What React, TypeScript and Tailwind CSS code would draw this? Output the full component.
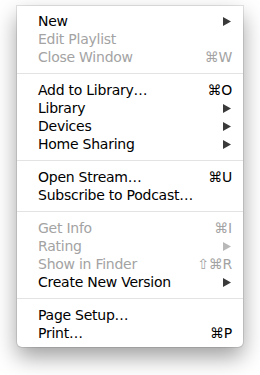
import React from "react";

type Item =
  | { sep: true }
  | { label: string; disabled?: boolean; shortcut?: string; sub?: boolean; sep?: false };

const items: Item[] = [
  { label: "New", sub: true },
  { label: "Edit Playlist", disabled: true },
  { label: "Close Window", disabled: true, shortcut: "⌘W" },
  { sep: true },
  { label: "Add to Library…", shortcut: "⌘O" },
  { label: "Library", sub: true },
  { label: "Devices", sub: true },
  { label: "Home Sharing", sub: true },
  { sep: true },
  { label: "Open Stream…", shortcut: "⌘U" },
  { label: "Subscribe to Podcast…" },
  { sep: true },
  { label: "Get Info", disabled: true, shortcut: "⌘I" },
  { label: "Rating", disabled: true, sub: true },
  { label: "Show in Finder", disabled: true, shortcut: "⇧⌘R" },
  { label: "Create New Version", sub: true },
  { sep: true },
  { label: "Page Setup…" },
  { label: "Print…", shortcut: "⌘P" },
];

function Arrow({ disabled }: { disabled?: boolean }) {
  return (
    <svg width="8" height="9" viewBox="0 0 8 9" className="mr-[1px]">
      <polygon points="0,0 8,4.5 0,9" fill={disabled ? "#b8b8b8" : "#3a3a3a"} />
    </svg>
  );
}

export default function App() {
  return (
    <div className="w-[260px] h-[375px] bg-white pt-[6px] pl-[17px]">
      <div
        className="w-[226px] bg-white rounded-b-[5px] pt-[6px] pb-[5px] shadow-[0_0_0_1px_rgba(0,0,0,0.10),0_10px_22px_rgba(0,0,0,0.38)]"
        style={{ fontFamily: '"DejaVu Sans", sans-serif' }}
      >
        {items.map((it, i) =>
          it.sep ? (
            <div key={i} className="h-[15px] flex items-center">
              <div className="w-full h-px bg-[#e3e3e3]" />
            </div>
          ) : (
            <div
              key={i}
              className={`h-[18px] flex items-center justify-between pl-[21px] pr-[11px] text-[14px] leading-[18px] tracking-[-0.25px] ${
                it.disabled ? "text-[#a3a3a3]" : "text-black"
              }`}
            >
              <span>{it.label}</span>
              {it.sub ? (
                <Arrow disabled={it.disabled} />
              ) : it.shortcut ? (
                <span>{it.shortcut}</span>
              ) : null}
            </div>
          )
        )}
      </div>
    </div>
  );
}
